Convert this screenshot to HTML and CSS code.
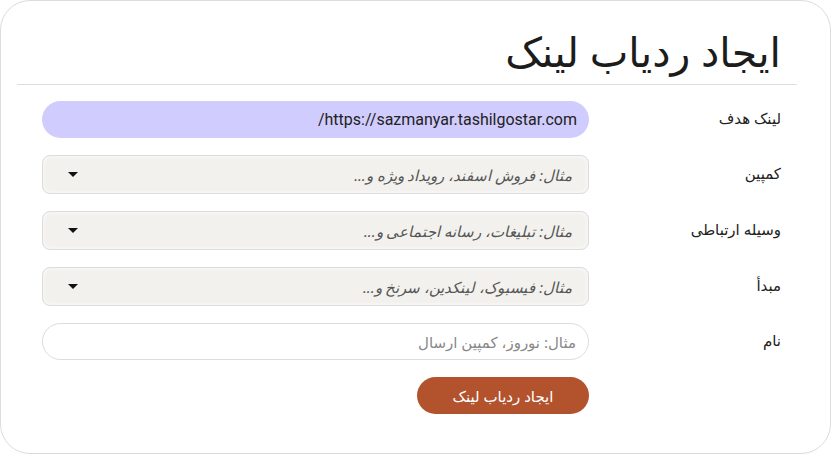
FILE: index.html
```html
<!DOCTYPE html>
<html lang="fa" dir="rtl">
<head>
<meta charset="utf-8">
<link rel="stylesheet" href="styles.css">
</head>
<body>
<div class="card">
  <h1 class="title">ایجاد ردیاب لینک</h1>
  <hr class="sep">
  <form class="form">
    <label class="label">لینک هدف</label>
    <div class="field url">https://sazmanyar.tashilgostar.com/</div>

    <label class="label">کمپین</label>
    <div class="field select"><span class="ph">مثال: فروش اسفند، رویداد ویژه و...</span><span class="arrow"></span></div>

    <label class="label">وسیله ارتباطی</label>
    <div class="field select"><span class="ph">مثال: تبلیغات، رسانه اجتماعی و...</span><span class="arrow"></span></div>

    <label class="label">مبدأ</label>
    <div class="field select"><span class="ph">مثال: فیسبوک، لینکدین، سرنخ و...</span><span class="arrow"></span></div>

    <label class="label">نام</label>
    <div class="field text"><span class="ph2">مثال: نوروز، کمپین ارسال</span></div>

    <span class="label"></span>
    <div class="actions"><button type="button" class="btn">ایجاد ردیاب لینک</button></div>
  </form>
</div>
</body>
</html>
```

FILE: styles.css
```css
* { box-sizing: border-box; }
html, body { margin: 0; padding: 0; background: #fff; }
body {
  font-family: "Noto Sans", "DejaVu Sans", sans-serif;
  color: #222;
  width: 831px;
  height: 455px;
  overflow: hidden;
}
.card {
  width: 831px;
  height: 454px;
  border: 1px solid #dcdcdc;
  border-radius: 30px;
  padding: 0 33px 0 16px;
}
.title {
  margin: 0;
  padding: 22px 16px 0 0;
  height: 83px;
  font-size: 41px;
  font-weight: 500;
  line-height: 56px;
  color: #1c1c1c;
}
.sep {
  margin: 0;
  border: 0;
  border-top: 1px solid #dedede;
}
.form {
  display: grid;
  grid-template-columns: 192px 547px;
  row-gap: 17px;
  padding: 16px 16px 0 26px;
  align-items: center;
}
.label {
  font-size: 15px;
  color: #222;
  text-align: right;
  margin-top: -3px;
}
.field {
  display: flex;
  align-items: center;
  font-size: 15px;
}
.url {
  height: 37px;
  background: #d0ccfd;
  border-radius: 19px;
  padding: 0 12px;
  font-family: Roboto, "Liberation Sans", sans-serif;
  font-size: 16px;
  color: #222;
  direction: rtl;
}
.select {
  height: 39px;
  background: #f2f1ee;
  border: 1px solid #dcdcdc;
  border-radius: 8px;
  padding: 0 16px 0 25px;
  justify-content: space-between;
  box-shadow: inset 0 0 4px rgba(255,255,255,0.9);
}
.ph {
  font-style: italic;
  color: #555;
}
.arrow {
  width: 0;
  height: 0;
  border-left: 5px solid transparent;
  border-right: 5px solid transparent;
  border-top: 5px solid #111;
}
.text {
  height: 37px;
  border: 1px solid #dcdcdc;
  border-radius: 19px;
  padding: 0 12px;
}
.ph2 { color: #888; }
.actions { display: flex; }
.btn {
  height: 37px;
  width: 172px;
  border: 0;
  border-radius: 19px;
  background: #b2532e;
  color: #fff;
  font-family: inherit;
  font-size: 15px;
  font-weight: 500;
}
```
